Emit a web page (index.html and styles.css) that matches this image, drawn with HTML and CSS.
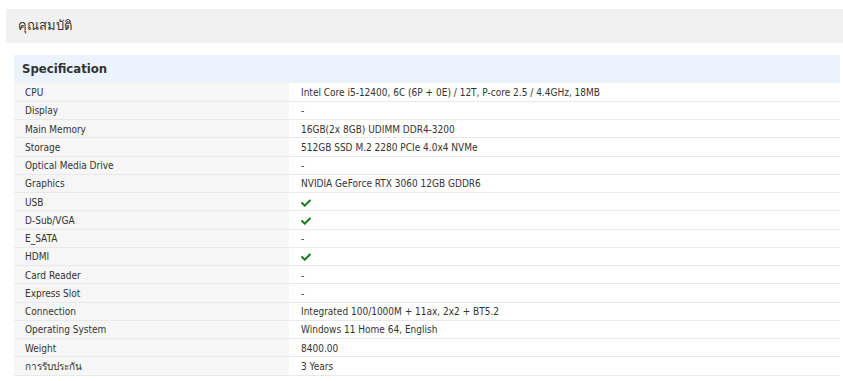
FILE: index.html
```html
<!DOCTYPE html>
<html lang="th">
<head>
<meta charset="utf-8">
<title>คุณสมบัติ</title>
<link rel="stylesheet" href="styles.css">
</head>
<body>
<div class="page">
  <div class="title-bar">คุณสมบัติ</div>
  <div class="spec">
    <div class="spec-head">Specification</div>
    <table class="spec-table">
      <tr><td class="label">CPU</td><td class="value">Intel Core i5-12400, 6C (6P + 0E) / 12T, P-core 2.5 / 4.4GHz, 18MB</td></tr>
      <tr><td class="label">Display</td><td class="value">-</td></tr>
      <tr><td class="label">Main Memory</td><td class="value">16GB(2x 8GB) UDIMM DDR4-3200</td></tr>
      <tr><td class="label">Storage</td><td class="value">512GB SSD M.2 2280 PCIe 4.0x4 NVMe</td></tr>
      <tr><td class="label">Optical Media Drive</td><td class="value">-</td></tr>
      <tr><td class="label">Graphics</td><td class="value">NVIDIA GeForce RTX 3060 12GB GDDR6</td></tr>
      <tr><td class="label">USB</td><td class="value"><svg class="check" viewBox="0 0 512 400"><path d="M173.9 391.4L7.5 225c-10-10-10-26.2 0-36.2l36.2-36.2c10-10 26.2-10 36.2 0L192 264.7 432.1 24.6c10-10 26.2-10 36.2 0l36.2 36.2c10 10 10 26.2 0 36.2L210.1 391.4c-10 10-26.2 10-36.2 0z"/></svg></td></tr>
      <tr><td class="label">D-Sub/VGA</td><td class="value"><svg class="check" viewBox="0 0 512 400"><path d="M173.9 391.4L7.5 225c-10-10-10-26.2 0-36.2l36.2-36.2c10-10 26.2-10 36.2 0L192 264.7 432.1 24.6c10-10 26.2-10 36.2 0l36.2 36.2c10 10 10 26.2 0 36.2L210.1 391.4c-10 10-26.2 10-36.2 0z"/></svg></td></tr>
      <tr><td class="label">E_SATA</td><td class="value">-</td></tr>
      <tr><td class="label">HDMI</td><td class="value"><svg class="check" viewBox="0 0 512 400"><path d="M173.9 391.4L7.5 225c-10-10-10-26.2 0-36.2l36.2-36.2c10-10 26.2-10 36.2 0L192 264.7 432.1 24.6c10-10 26.2-10 36.2 0l36.2 36.2c10 10 10 26.2 0 36.2L210.1 391.4c-10 10-26.2 10-36.2 0z"/></svg></td></tr>
      <tr><td class="label">Card Reader</td><td class="value">-</td></tr>
      <tr><td class="label">Express Slot</td><td class="value">-</td></tr>
      <tr><td class="label">Connection</td><td class="value">Integrated 100/1000M + 11ax, 2x2 + BT5.2</td></tr>
      <tr><td class="label">Operating System</td><td class="value">Windows 11 Home 64, English</td></tr>
      <tr><td class="label">Weight</td><td class="value">8400.00</td></tr>
      <tr><td class="label">การรับประกัน</td><td class="value">3 Years</td></tr>
    </table>
  </div>
</div>
</body>
</html>
```
FILE: styles.css
```css
html, body {
  margin: 0;
  padding: 0;
  background: #ffffff;
}
body {
  font-family: "DejaVu Sans Condensed", "DejaVu Sans", "Noto Sans", sans-serif;
  color: #333333;
}
.page {
  padding: 9px 0 0 6px;
}
.title-bar {
  height: 34px;
  line-height: 33px;
  background: #f1f1f1;
  padding-left: 12px;
  font-family: "DejaVu Sans", "Noto Sans", sans-serif;
  font-size: 13px;
  color: #333333;
}
.spec {
  margin: 12px 3px 0 8px;
}
.spec-head {
  height: 28px;
  line-height: 27px;
  background: #ebf3fd;
  padding-left: 8px;
  font-size: 13px;
  font-weight: bold;
  color: #333333;
  border-bottom: 1px solid #eef1f5;
  box-sizing: border-box;
}
.spec-table {
  width: 100%;
  border-collapse: collapse;
  font-size: 10px;
}
.spec-table td {
  height: 18.25px;
  padding: 1px 0 0 0;
  border-bottom: 1px solid #e9e9e9;
  vertical-align: middle;
  white-space: nowrap;
  box-sizing: border-box;
}
.label {
  width: 275px;
  padding-left: 11px !important;
  background: #f6f6f6;
  color: #333333;
}
.value {
  padding-left: 12px !important;
  background: #ffffff;
  color: #333333;
}
.check {
  width: 10px;
  height: 8px;
  fill: #1d7a1d;
  vertical-align: middle;
}
```
